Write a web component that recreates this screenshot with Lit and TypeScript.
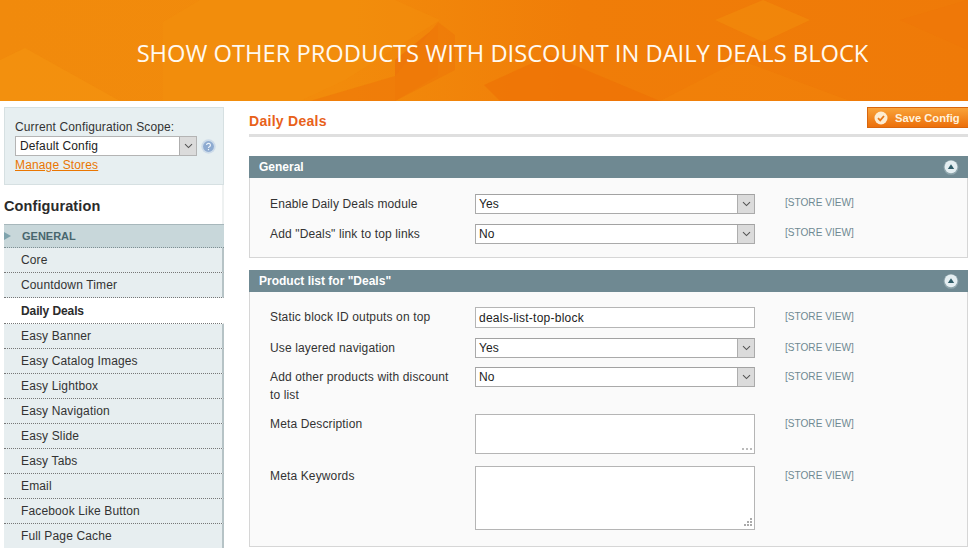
import { LitElement, html, css, svg } from "lit";
import { customElement } from "lit/decorators.js";

const chevron = html`<span class="arrow"><svg width="9" height="6" viewBox="0 0 9 6"><path d="M1 1.2 L4.5 4.6 L8 1.2" fill="none" stroke="#555" stroke-width="1.1"/></svg></span>`;

const collapse = html`<svg class="collapse" width="16" height="16" viewBox="0 0 16 16"><circle cx="8" cy="8.4" r="7.4" fill="#8fa6ad"/><circle cx="8" cy="7.8" r="6.4" fill="#e4eef1"/><path d="M4.8 10 L8 5.2 L11.2 10 Z" fill="#2f5c68"/></svg>`;

const items = ["Core", "Countdown Timer", "Daily Deals", "Easy Banner", "Easy Catalog Images", "Easy Lightbox", "Easy Navigation", "Easy Slide", "Easy Tabs", "Email", "Facebook Like Button", "Full Page Cache"];

@customElement("app-root")
export class AppRoot extends LitElement {
  static styles = css`
    :host { display: block; width: 968px; height: 548px; overflow: hidden; background: #fff; font-family: "Liberation Sans", Arial, sans-serif; font-size: 12px; color: #2f2f2f; letter-spacing: .14px; }
    .banner { position: relative; height: 101px; background: linear-gradient(90deg, #f18a0c 0%, #f28b0b 35%, #f07d08 60%, #ef7a08 100%); display: flex; align-items: center; justify-content: center; overflow: hidden; }
    .banner svg { position: absolute; inset: 0; }
    .banner h1 { position: relative; margin: 4px 0 0 37px; font-family: "Open Sans", sans-serif; font-weight: 400; font-size: 23.7px; letter-spacing: 0; color: #fff9f0; white-space: nowrap; }
    .page { display: flex; height: 447px; overflow: hidden; }
    .side { width: 220px; margin-left: 4px; padding-top: 6px; flex: none; }
    .scope { height: 78px; box-sizing: border-box; background: #e7eff1; border: 1px solid #d6e0e2; padding: 12px 5px 0 10px; color: #333; line-height: 15px; }
    .scope-row { display: flex; align-items: center; gap: 4px; margin-top: 1px; }
    .select { display: flex; align-items: center; justify-content: space-between; box-sizing: border-box; background: #fff; border: 1px solid #aaa; border-top-color: #a2a2a2; color: #222; padding-left: 4px; flex: none; }
    .scope .select { width: 182px; height: 20px; border-color: #b4b4b4; }
    .arrow { display: flex; align-items: center; justify-content: center; width: 17px; height: 100%; background: #dbdbdb; border-left: 1px solid #aeaeae; box-sizing: border-box; }
    .scope a { display: block; margin-top: 2px; color: #ea7601; text-decoration: underline; }
    .help { display: block; flex: none; }
    .conf { height: 39px; box-sizing: border-box; padding-top: 3px; background: #fff; border-right: 2px solid #eef1f1; font-size: 14.5px; letter-spacing: .1px; font-weight: bold; color: #2b2b2b; display: flex; align-items: center; }
    .group { display: flex; align-items: center; gap: 11px; height: 24px; box-sizing: border-box; background: #c8d7da; border-top: 1px solid #a7b7bb; border-bottom: 1px dotted #7f8f93; color: #48666e; font-weight: bold; font-size: 11px; letter-spacing: 0; }
    .group i { width: 0; height: 0; border-left: 7px solid #7fa3ad; border-top: 4px solid transparent; border-bottom: 4px solid transparent; }
    .item { height: 25px; box-sizing: border-box; background: #e7eef0; border-right: 2px solid #b6c3c6; border-bottom: 1px dotted #777; padding-left: 17px; display: flex; align-items: center; color: #333; }
    .item.active { background: #fff; font-weight: bold; border-right-color: #fff; color: #2b2b2b; margin-top: 1px; letter-spacing: -.1px; }
    main { margin-left: 25px; width: 719px; flex: none; padding-top: 6px; }
    .title { display: flex; justify-content: space-between; height: 27px; border-bottom: 3px solid #dfdfdf; align-items: flex-start; }
    .title h2 { margin: 5px 0 0; font-size: 14px; letter-spacing: .28px; font-weight: bold; color: #e8611a; line-height: 18px; }
    .save { display: flex; align-items: center; gap: 7px; height: 21px; width: 101px; box-sizing: border-box; padding-left: 6px; background: linear-gradient(#f9a33a, #ec6f0a); border: 1px solid #d8660e; border-right: 0; color: #fff2dd; font-weight: bold; font-size: 11.2px; letter-spacing: 0; }
    .head { display: flex; justify-content: space-between; align-items: center; height: 22px; background: #6f8992; color: #fff; font-weight: bold; letter-spacing: 0; padding: 0 10px; }
    .head .collapse { margin-right: -1px; }
    .general { margin-top: 19px; }
    .box { background: #fafafa; border: 1px solid #d6d6d6; border-top: 0; box-sizing: border-box; padding: 16px 0 0 20px; }
    .general .box { height: 80px; }
    .products { margin-top: 12px; }
    .products .box { height: 255px; padding-top: 15px; }
    .row { display: grid; grid-template-columns: 205px 280px auto; align-items: start; height: 30px; }
    .row label { line-height: 18px; padding-top: 1px; width: 185px; color: #333; }
    .row .scopeview { margin-left: 30px; font-size: 10.1px; letter-spacing: 0; color: #6f8992; line-height: 16px; padding-top: 1px; }
    .products .row .scopeview { padding-top: 2px; }
    .row .select { height: 20px; width: 280px; padding-left: 3px; }
    .row .text { height: 21px; width: 280px; box-sizing: border-box; background: #fff; border: 1px solid #b5b5b5; padding: 3px 0 0 3px; color: #222; line-height: 14px; letter-spacing: .25px; }
    .row .area { position: relative; width: 280px; box-sizing: border-box; background: #fff; border: 1px solid #b5b5b5; }
    .area svg { position: absolute; right: 2px; bottom: 2px; }
    .r-a { height: 31px; }
    .r-b { height: 29px; }
    .r-tall { height: 47px; }
    .r-ta1 { height: 52px; }
    .r-ta2 { height: 64px; }
    .r-ta1 .area { height: 40px; }
    .r-ta2 .area { height: 64px; }
  `;

  private rowSelect(label: string, value: string, cls = "") {
    return html`<div class="row ${cls}"><label>${label}</label><div class="select">${value}${chevron}</div><span class="scopeview">[STORE VIEW]</span></div>`;
  }

  render() {
    return html`
      <div class="banner">
        <svg width="968" height="101" viewBox="0 0 968 101">
          ${svg`
            <polygon points="0,60 25,48 120,101 0,101" fill="#f5950f" opacity=".5"/>
            <polygon points="163,22 200,0 395,0 440,20 345,80 300,101 163,101" fill="#f4930e" opacity=".35"/>
            <polygon points="395,60 438,25 438,75 395,101" fill="#ed7409" opacity=".85"/>
            <polygon points="438,22 455,35 455,70 395,101 310,101 395,76" fill="#ef7a09" opacity=".8"/>
            <polygon points="484,85 550,55 660,101 500,101" fill="#ee7206" opacity=".7"/>
            <polygon points="715,20 763,0 810,20 763,42" fill="#f1880b" opacity=".8"/>
            <polygon points="660,101 740,60 850,101" fill="#f1840a" opacity=".45"/>
            <polygon points="900,20 968,0 968,50" fill="#ee7608" opacity=".6"/>
          `}
        </svg>
        <h1>SHOW OTHER PRODUCTS WITH DISCOUNT IN DAILY DEALS BLOCK</h1>
      </div>
      <div class="page">
        <aside class="side">
          <div class="scope">
            Current Configuration Scope:
            <div class="scope-row">
              <div class="select">Default Config${chevron}</div>
              <svg class="help" width="15" height="15" viewBox="0 0 15 15"><circle cx="7.5" cy="7.5" r="7.2" fill="#cddbe9"/><circle cx="7.5" cy="7.5" r="5.4" fill="#8eabd1"/><path d="M5.6 6a1.9 1.8 0 1 1 2.8 1.7c-.6.3-.9.6-.9 1.2M7.5 10v1.2" fill="none" stroke="#eef4fa" stroke-width="1.2"/></svg>
            </div>
            <a>Manage Stores</a>
          </div>
          <div class="conf">Configuration</div>
          <div class="group"><i></i>GENERAL</div>
          ${items.map((t) => html`<div class="item ${t === "Daily Deals" ? "active" : ""}">${t}</div>`)}
        </aside>
        <main>
          <div class="title">
            <h2>Daily Deals</h2>
            <div class="save">
              <svg width="14" height="14" viewBox="0 0 14 14"><circle cx="7" cy="7" r="6.5" fill="#fdecd2"/><path d="M4 7.2 L6.2 9.4 L10 5" fill="none" stroke="#e8781a" stroke-width="1.8"/></svg>
              Save Config
            </div>
          </div>
          <section class="general">
            <div class="head">General ${collapse}</div>
            <div class="box">
              ${this.rowSelect("Enable Daily Deals module", "Yes")}
              ${this.rowSelect('Add "Deals" link to top links', "No")}
            </div>
          </section>
          <section class="products">
            <div class="head">Product list for "Deals" ${collapse}</div>
            <div class="box">
              <div class="row r-a"><label>Static block ID outputs on top</label><div class="text">deals-list-top-block</div><span class="scopeview">[STORE VIEW]</span></div>
              ${this.rowSelect("Use layered navigation", "Yes", "r-b")}
              ${this.rowSelect("Add other products with discount to list", "No", "r-tall")}
              <div class="row r-ta1"><label>Meta Description</label><div class="area"><svg width="10" height="4" viewBox="0 0 10 4"><path d="M0 1h2v2H0zM4 1h2v2H4zM8 1h2v2H8z" fill="#bbb"/></svg></div><span class="scopeview">[STORE VIEW]</span></div>
              <div class="row r-ta2"><label>Meta Keywords</label><div class="area"><svg width="9" height="9" viewBox="0 0 9 9"><path d="M7 0h2v2H7zM4 3h2v2H4zM7 3h2v2H7zM1 6h2v2H1zM4 6h2v2H4zM7 6h2v2H7z" fill="#aaa"/></svg></div><span class="scopeview">[STORE VIEW]</span></div>
            </div>
          </section>
        </main>
      </div>
    `;
  }
}
